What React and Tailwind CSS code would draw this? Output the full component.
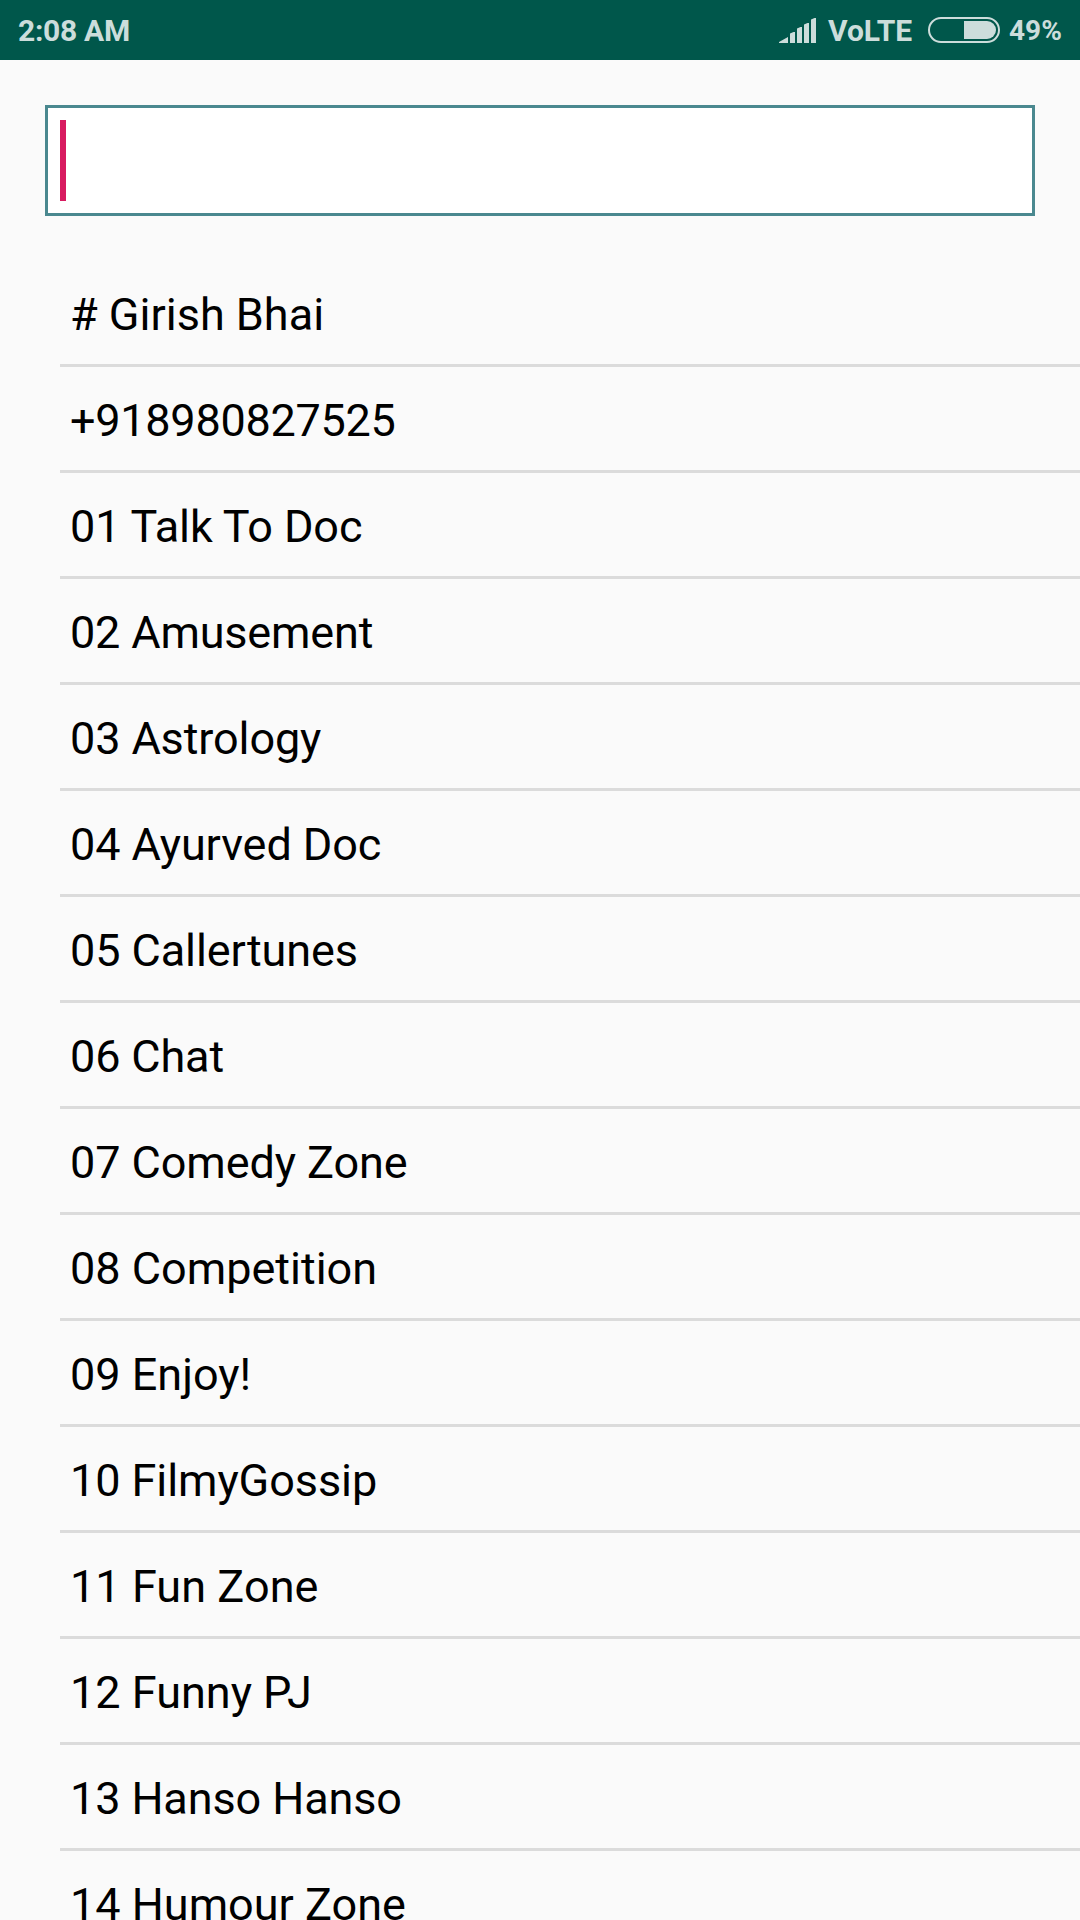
const rows = ["# Girish Bhai","+918980827525","01 Talk To Doc","02 Amusement","03 Astrology","04 Ayurved Doc","05 Callertunes","06 Chat","07 Comedy Zone","08 Competition","09 Enjoy!","10 FilmyGossip","11 Fun Zone","12 Funny PJ","13 Hanso Hanso","14 Humour Zone"];

const tracking = {
  "+918980827525": "tracking-[-0.26px]",
  "01 Talk To Doc": "tracking-[-0.12px]",
  "02 Amusement": "tracking-[-0.18px]",
  "03 Astrology": "tracking-[-0.12px]",
  "04 Ayurved Doc": "tracking-[-0.08px]",
  "05 Callertunes": "tracking-[-0.08px]",
  "06 Chat": "tracking-[-0.15px]",
  "07 Comedy Zone": "tracking-[-0.08px]",
  "10 FilmyGossip": "tracking-[-0.08px]",
  "11 Fun Zone": "tracking-[0.06px]",
  "13 Hanso Hanso": "tracking-[-0.12px]",
};

export default function App() {
  return (
    <div className="flex h-[1920px] w-[1080px] flex-col overflow-hidden bg-[#fafafa] font-['Roboto',sans-serif] text-black">
      <header className="flex h-[60px] shrink-0 items-center justify-between bg-[#00574b] pl-[18px] pr-[19px] text-[30px] font-bold text-[#ccdddb]">
        <span className="pt-px tracking-[-0.3px]">2:08 AM</span>
        <div className="flex h-full items-center">
          <svg width="37" height="25" viewBox="0 0 37 25" fill="#ccdddb" className="mr-3 mt-px">
            <path d="M0 25V24L9 19V25ZM11 25V15.5L14.5 14H16V25ZM18 25V10.5L21.5 9H23V25ZM25 25V6.5L28.5 5H30V25ZM32 25V1.5L35.5 0H37V25Z" />
          </svg>
          <span className="w-[100px] pt-px">VoLTE</span>
          <div className="flex h-[26px] w-[72px] justify-end rounded-full border-2 border-[#ccdddb] p-[2px]">
            <div className="h-[18px] w-8 rounded-r-full bg-[#ccdddb]" />
          </div>
          <span className="ml-[9px] w-[52px] pt-[2px] text-[28px]">49%</span>
        </div>
      </header>
      <div className="mx-[45px] mt-[45px] flex h-[111px] shrink-0 items-center border-[3px] border-[#4a888f] bg-white pl-3">
        <div className="h-[81px] w-[6px] bg-[#d81b60]" />
      </div>
      <ul className="ml-[60px] mt-[45px]">
        {rows.map((r) => (
          <li key={r} className={`flex h-[106px] items-center border-b-[3px] border-[#dbdbdb] pl-[10px] pt-1 text-[45px] ${tracking[r] || ""}`}>{r}</li>
        ))}
      </ul>
    </div>
  );
}
